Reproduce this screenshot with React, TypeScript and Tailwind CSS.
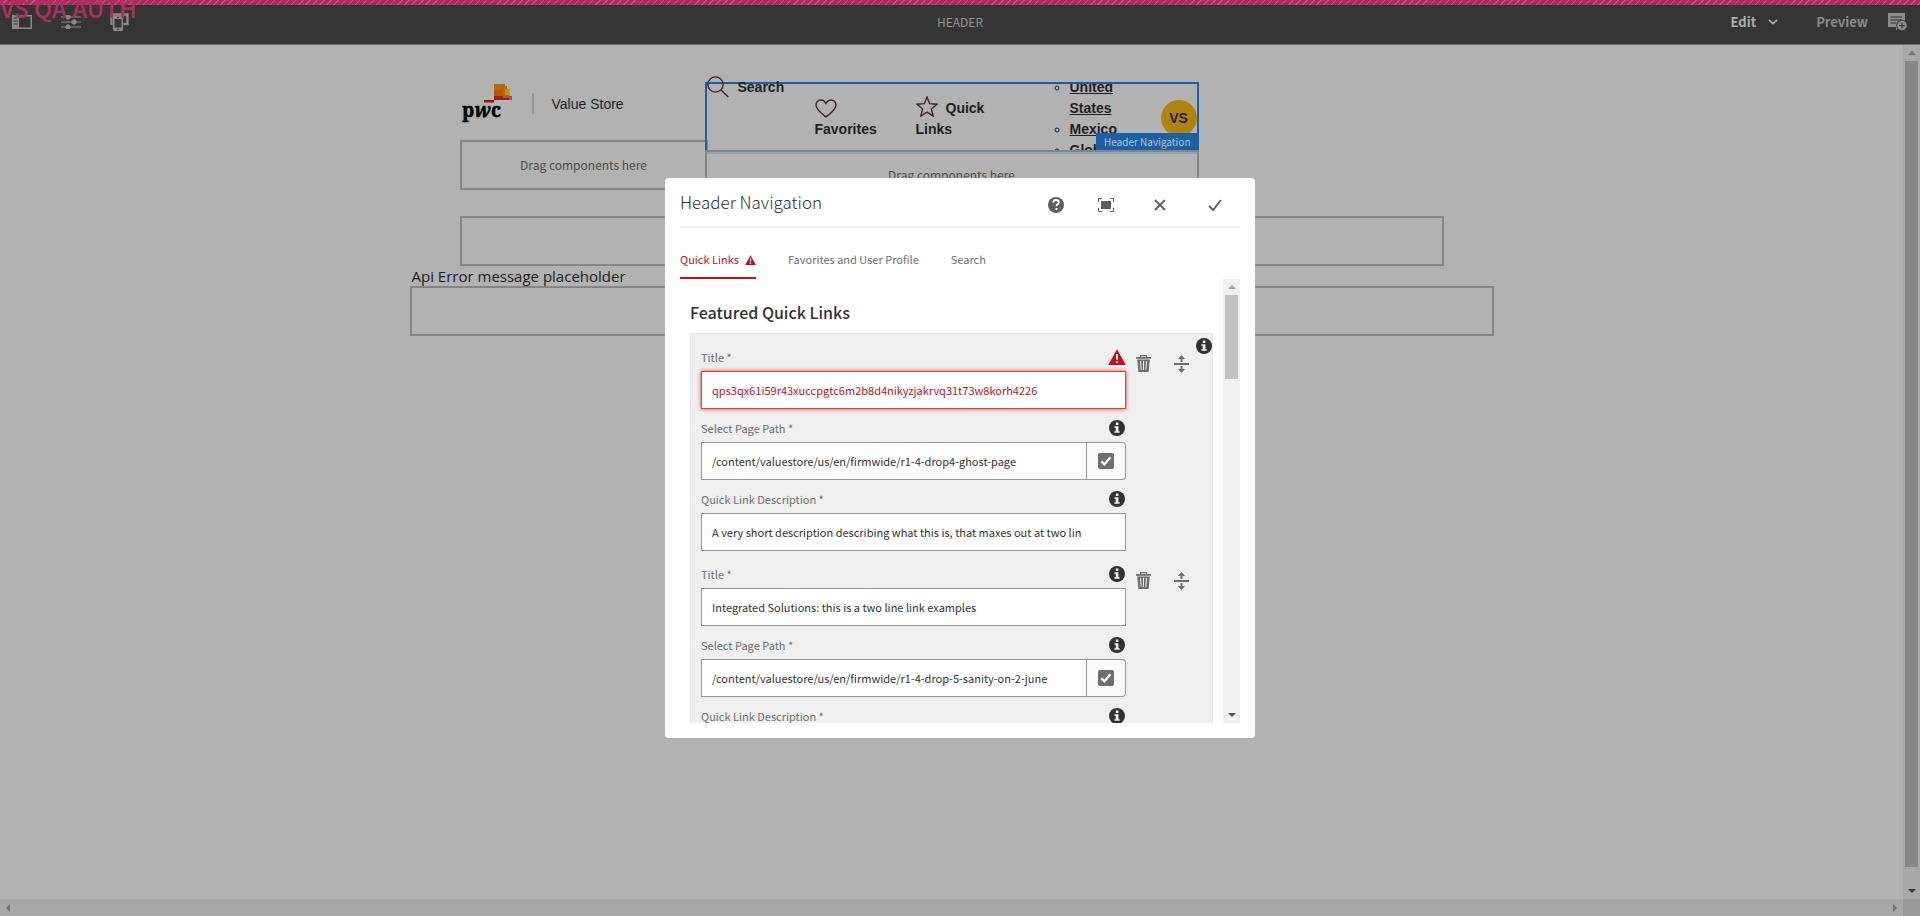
import type { ReactNode } from "react";

const clean = "font-['Noto_Sans_CJK_SC','Noto_Sans',sans-serif]";

function InfoIcon() {
  return (
    <svg viewBox="0 0 16 16" className="size-4 shrink-0" aria-hidden="true">
      <circle cx="8" cy="8" r="8" fill="#323232" />
      <path d="M6.8 2.6h2.6v2.4H6.8zM5.4 6.2h4v5h1.3v1.6H5.4v-1.6h1.3V7.8H5.4z" fill="#efefef" />
    </svg>
  );
}

function AlertIcon({ className }: { className: string }) {
  return (
    <svg viewBox="0 0 18 16" className={className} aria-hidden="true">
      <path d="M9 .2 17.8 16H.2z" fill="#c30f1a" />
      <path d="M8 5h2v5.4H8zM8 12h2v2H8z" fill="#fff" />
    </svg>
  );
}

function TrashIcon() {
  return (
    <svg viewBox="0 0 15 17" className="h-[17px] w-[15px]" fill="none" aria-hidden="true">
      <path d="M4.5 2V.6h6V2" stroke="#6e6e6e" strokeWidth="1.2" />
      <path d="M0 2h15v1.8H0z" fill="#6e6e6e" />
      <path d="M1.2 4.4h12.6L12.6 17H2.4z" fill="#6e6e6e" />
      <path d="M4.6 6l.5 9M7.5 6v9M10.4 6l-.5 9" stroke="#efefef" strokeWidth="1" />
    </svg>
  );
}

function ReorderIcon() {
  return (
    <svg viewBox="0 0 15 18" className="h-[18px] w-[15px]" fill="#6e6e6e" aria-hidden="true">
      <path d="M0 8h15v2H0zM7.5 0 11 4H8.5v3h-2V4H4zM7.5 18 11 14H8.5v-3h-2v3H4z" />
    </svg>
  );
}

function Field({
  id,
  label,
  value,
  invalid = false,
  picker = false,
}: {
  id: string;
  label: string;
  value: string;
  invalid?: boolean;
  picker?: boolean;
}) {
  const tone = invalid
    ? "border-[#e14132] text-[#c30f1a] shadow-[0_0_4px_#e14132]"
    : "border-[#969696] text-[#323232]";
  return (
    <div className="mb-[9px] flex flex-col gap-1">
      <div className="flex h-5 items-center justify-between">
        <label htmlFor={id} className="text-[11px] leading-5 text-[#6e6e6e]">
          {label} *
        </label>
        {invalid ? <AlertIcon className="h-4 w-[18px]" /> : <span className="mr-px"><InfoIcon /></span>}
      </div>
      <div className="flex h-[38px]">
        <input
          id={id}
          defaultValue={value}
          className={`min-w-0 flex-1 border bg-white px-2.5 text-[11px] outline-none ${tone}`}
        />
        {picker && (
          <button
            type="button"
            aria-label="Open selection dialog"
            className="flex w-[39px] items-center justify-center rounded-r border border-l-0 border-[#969696] bg-[#fafafa]"
          >
            <svg viewBox="0 0 16 16" className="size-4" aria-hidden="true">
              <rect width="16" height="16" rx="2" fill="#6e6e6e" />
              <path d="M3.4 8.4l3 3 6-7.2" fill="none" stroke="#fff" strokeWidth="2.2" />
            </svg>
          </button>
        )}
      </div>
    </div>
  );
}

function LinkItem({ id, title, path, description, invalid }: { id: string; title: string; path: string; description: string; invalid?: boolean }) {
  return (
    <div className="mb-1 flex gap-2.5">
      <div className="w-[425px]">
        <Field id={`${id}-title`} label="Title" value={title} invalid={invalid} />
        <Field id={`${id}-path`} label="Select Page Path" value={path} picker />
        <Field id={`${id}-desc`} label="Quick Link Description" value={description} />
      </div>
      <div className="flex items-start gap-[23px] pt-2">
        <button type="button" aria-label="Delete">
          <TrashIcon />
        </button>
        <button type="button" aria-label="Reorder">
          <ReorderIcon />
        </button>
      </div>
    </div>
  );
}

function DropZone({ className, children }: { className: string; children?: ReactNode }) {
  return (
    <div className={`flex h-[50px] items-center justify-center border-2 border-[#858585] text-[#4c4c4c] ${clean} text-xs ${className}`}>
      {children}
    </div>
  );
}

function TopBar() {
  return (
    <header className={`relative flex h-[45px] shrink-0 items-center justify-between border-b border-[#6f6f6f] bg-[#353535] ${clean}`}>
      <div className="flex items-center gap-[29px] pl-3">
        <button type="button" aria-label="Toggle side panel">
          <svg viewBox="0 0 20 14" className="h-3.5 w-5" aria-hidden="true">
            <path d="M0 0h20v14H0zM7 1.5v11h11.5v-11z" fill="#8b8b8b" fillRule="evenodd" />
            <path d="M1.5 3h4M1.5 6h4M1.5 9h4" stroke="#353535" strokeWidth="1.2" />
          </svg>
        </button>
        <button type="button" aria-label="Page information">
          <svg viewBox="0 0 20 14" className="h-3.5 w-5" fill="#8b8b8b" stroke="#8b8b8b" aria-hidden="true">
            <path d="M0 2h20M0 7h20M0 12h20" strokeWidth="1" />
            <circle cx="7" cy="2" r="2.2" />
            <circle cx="13" cy="7" r="2.2" />
            <circle cx="7" cy="12" r="2.2" />
          </svg>
        </button>
        <button type="button" aria-label="Emulator">
          <svg viewBox="0 0 19 18" className="h-[18px] w-[19px]" aria-hidden="true">
            <path d="M1.5 12V1.5h16V11h-4" fill="none" stroke="#8b8b8b" strokeWidth="2.4" />
            <rect x="3" y="2.5" width="10" height="15.5" rx="1" fill="#8b8b8b" />
            <path d="M4.5 6h7v8.500h-7z" fill="#353535" />
            <path d="M7 4.300h2M7 16.200h2" stroke="#353535" />
          </svg>
        </button>
      </div>
      <h1 className="absolute left-1/2 top-3 -translate-x-1/2 text-xs leading-5 text-[#979797]">HEADER</h1>
      <div className="flex items-center pr-3 text-[13px] leading-5">
        <button type="button" className="flex items-center gap-3 font-bold text-[#adadad]">
          Edit
          <svg viewBox="0 0 10 6" className="h-1.5 w-2.5" aria-hidden="true">
            <path d="M1 1l4 3.600L9 1" fill="none" stroke="#adadad" strokeWidth="1.700" />
          </svg>
        </button>
        <button type="button" className="ml-[38px] font-bold text-[#8b8b8b]">Preview</button>
        <button type="button" aria-label="Annotate" className="ml-5">
          <svg viewBox="0 0 20 18" className="h-[18px] w-5" aria-hidden="true">
            <path d="M0 0h17v8l-5 7-4 2v-3H0z" fill="#8b8b8b" />
            <path d="M2.500 4h11.500M2.500 7h11.500M2.500 10h6" stroke="#353535" strokeWidth="1.200" />
            <circle cx="14" cy="12.500" r="5.800" fill="#353535" />
            <circle cx="14" cy="12.500" r="4.800" fill="#8b8b8b" />
            <path d="M14 9.700v5.600M11.200 12.500h5.600" stroke="#353535" strokeWidth="1.200" />
          </svg>
        </button>
      </div>
      <div className="absolute inset-x-0 top-0 h-[5px] bg-[repeating-linear-gradient(135deg,#b02a60_0,#b02a60_4px,#bf5481_4px,#bf5481_5px)]" />
      <p className="absolute left-0 -top-1.5 text-2xl leading-7 font-medium text-[#b02f63]">VS QA AUTH</p>
    </header>
  );
}

function Brand() {
  return (
    <div className="flex h-[95px] items-start pt-[39px]">
      <svg viewBox="0 0 54 40" className="h-10 w-[54px]" aria-label="pwc" role="img">
        <rect x="24" y="16" width="10" height="2.500" fill="#8c1a12" />
        <rect x="34" y="0" width="11" height="16" fill="#b8560a" />
        <rect x="34" y="0" width="9" height="6" fill="#b5690c" />
        <rect x="43" y="2" width="4" height="10" fill="#b8650c" />
        <rect x="45" y="5" width="5" height="8" fill="#bd9713" />
        <rect x="34" y="12" width="16" height="4" fill="#99220f" />
        <rect x="43" y="11" width="6" height="3" fill="#b3600f" />
        <rect x="49" y="12" width="3" height="4" fill="#b04a6c" />
        <text x="2" y="33" fontSize="19" fontWeight="700" fontFamily="'Noto Serif','DejaVu Serif',serif" fill="#000" stroke="#000" strokeWidth=".5">
          p<tspan fontStyle="italic">w</tspan>c
        </text>
      </svg>
      <span className="ml-[18px] mt-[9px] h-[21px] w-0.5 bg-[#989898]" />
      <span className="ml-[18px] mt-[10px] text-sm leading-5 text-[#222]">Value Store</span>
    </div>
  );
}

function HeaderNav() {
  return (
    <nav className="relative flex h-[70px] border-2 border-b-0 border-[#1c5fa5] text-sm leading-[21px] font-bold text-[#1f1f1f]">
      <a href="#search" className="absolute left-0 -top-2 flex gap-[9px]">
        <svg viewBox="0 0 22 22" className="size-[22px]" fill="none" stroke="#3d2226" strokeWidth="1.400" aria-hidden="true">
          <circle cx="8.500" cy="8.500" r="7.600" />
          <path d="M14 14l7.300 7" />
        </svg>
        <span className="mt-px">Search</span>
      </a>
      <div className="flex h-[70px] flex-1 overflow-hidden">
        <a href="#favorites" className="ml-[108px] w-[101px] pt-[15px]">
          <svg viewBox="0 0 22 19" className="mb-px h-[19px] w-[22px]" fill="none" stroke="#3d2226" strokeWidth="1.400" aria-hidden="true">
            <path d="M11 18C6.500 14.500 1 10.500 1 6a4.800 4.800 0 0 1 5-5c2.500 0 4 1.500 5 3.500C12 2.500 13.500 1 16 1a4.800 4.800 0 0 1 5 5c0 4.500-5.500 8.500-10 12z" />
          </svg>
          Favorites
        </a>
        <a href="#quick-links" className="w-[99px] pt-3">
          <span className="flex h-[23px] gap-2">
            <svg viewBox="0 0 22 21" className="h-[21px] w-[22px]" fill="none" stroke="#3d2226" strokeWidth="1.400" aria-hidden="true">
              <path d="M11 1l2.700 6.700 7.300.5-5.600 4.700 1.800 7.200-6.200-4-6.200 4 1.800-7.200L1 8.200l7.300-.5z" />
            </svg>
            <span className="mt-0.5">Quick</span>
          </span>
          <span className="block">Links</span>
        </a>
        <ul className="-mt-[7px] ml-[55px] w-[60px] list-[circle]">
          <li><a href="#us" className="underline">United States</a></li>
          <li><a href="#mexico" className="underline">Mexico</a></li>
          <li><a href="#global" className="underline">Global</a></li>
        </ul>
      </div>
      <span className="absolute right-0 top-4 flex size-9 items-center justify-center rounded-full bg-[#b0850f]">VS</span>
      <span className={`absolute -right-0.5 top-[49px] bg-[#1c5fa5] px-2 text-[10px] leading-[17px] font-normal text-[#b4c4d6] ${clean}`}>
        Header Navigation
      </span>
    </nav>
  );
}

function Arrow({ d, className, fill }: { d: string; className: string; fill: string }) {
  return (
    <svg viewBox="0 0 8 8" className={`size-2 ${className}`} fill={fill} aria-hidden="true">
      <path d={d} />
    </svg>
  );
}

const up = "M0 6l4-4 4 4z";
const down = "M0 2h8L4 6z";

function Dialog() {
  return (
    <section
      role="dialog"
      aria-label="Header Navigation"
      className={`flex h-[560px] w-[590px] flex-col rounded bg-white px-[15px] pb-[15px] ${clean}`}
    >
      <div className="flex h-[50px] shrink-0 items-center justify-between border-b-2 border-[#f0f0f0]">
        <h2 className="text-[17px] font-light text-[#323232]">Header Navigation</h2>
        <div className="flex items-center gap-9 pt-1.5 pr-[18px]">
          <button type="button" aria-label="Help">
            <svg viewBox="0 0 16 16" className="size-4" aria-hidden="true">
              <circle cx="8" cy="8" r="8" fill="#5f5f5f" />
              <path d="M5.200 5.600C5.300 3.900 6.400 3 8 3s2.800.9 2.800 2.400C10.800 7.300 8.400 7.200 8.400 9.300" fill="none" stroke="#fff" strokeWidth="1.800" />
              <path d="M7.400 11h2v2h-2z" fill="#fff" />
            </svg>
          </button>
          <button type="button" aria-label="Toggle full screen" className="-ml-0.5">
            <svg viewBox="0 0 16 14" className="h-3.5 w-4" aria-hidden="true">
              <path d="M3 3h10v8H3z" fill="#5f5f5f" />
              <path d="M.5 4V.5H4M12 .5h3.500V4M15.500 10v3.500H12M4 13.500H.5V10" fill="none" stroke="#5f5f5f" />
            </svg>
          </button>
          <button type="button" aria-label="Cancel" className="ml-1">
            <svg viewBox="0 0 12 12" className="size-3" aria-hidden="true">
              <path d="M1 1l10 10M11 1L1 11" stroke="#5f5f5f" strokeWidth="1.900" />
            </svg>
          </button>
          <button type="button" aria-label="Done" className="ml-1.5">
            <svg viewBox="0 0 14 12" className="h-3 w-3.5" aria-hidden="true">
              <path d="M1 7l4.200 4L13 1" fill="none" stroke="#5f5f5f" strokeWidth="1.900" />
            </svg>
          </button>
        </div>
      </div>
      <div role="tablist" className="flex h-[51px] shrink-0 items-end gap-8 text-[11px] text-[#6e6e6e]">
        <button type="button" role="tab" aria-selected="true" className="flex h-[37px] items-center gap-1.5 border-b-2 border-[#c30f1a] text-[#c30f1a]">
          Quick Links
          <AlertIcon className="h-2.5 w-[11px]" />
        </button>
        <button type="button" role="tab" aria-selected="false" className="h-[37px] pb-0.5">Favorites and User Profile</button>
        <button type="button" role="tab" aria-selected="false" className="h-[37px] pb-0.5">Search</button>
      </div>
      <div className="flex min-h-0 flex-1">
        <div className="min-w-0 flex-1 overflow-hidden pr-2.5 pl-2.5">
          <h3 className="pt-[21px] pb-[9px] text-base leading-6 font-medium text-[#323232]">Featured Quick Links</h3>
          <div className="relative border border-[#e6e6e6] bg-[#efefef] pt-[13px] pl-2.5">
            <span className="absolute top-1 right-0"><InfoIcon /></span>
            <LinkItem
              id="first"
              title="qps3qx61i59r43xuccpgtc6m2b8d4nikyzjakrvq31t73w8korh4226"
              path="/content/valuestore/us/en/firmwide/r1-4-drop4-ghost-page"
              description="A very short description describing what this is, that maxes out at two lin"
              invalid
            />
            <LinkItem
              id="second"
              title="Integrated Solutions: this is a two line link examples"
              path="/content/valuestore/us/en/firmwide/r1-4-drop-5-sanity-on-2-june"
              description=""
            />
          </div>
        </div>
        <div className="flex w-[17px] flex-col items-center bg-[#f0f0f0] py-1">
          <Arrow d={up} className="mb-1" fill="#a3a3a3" />
          <div className="h-[84px] w-[13px] bg-[#c1c1c1]" />
          <Arrow d={down} className="mt-auto" fill="#505050" />
        </div>
      </div>
    </section>
  );
}

export default function App() {
  return (
    <div className="relative flex h-screen flex-col overflow-hidden bg-[#b2b2b2] font-['Liberation_Sans',sans-serif]">
      <TopBar />
      <div className="flex min-h-0 flex-1">
        <main className="min-w-0 flex-1 overflow-hidden">
          <div className="mx-auto flex w-[984px]">
            <div className="w-[245px]">
              <Brand />
              <DropZone className="mr-[-3px]">Drag components here</DropZone>
            </div>
            <div className="w-[494px] pt-[37px]">
              <HeaderNav />
              <DropZone className="relative -mt-0.5 bg-[#b2b2b2] shadow-[inset_0_2px_#8ba3bd]">Drag components here</DropZone>
            </div>
          </div>
          <DropZone className="mx-auto mt-4 w-[984px]" />
          <div className="mx-auto w-[1084px]">
            <p className="pl-0.5 font-['Open_Sans',sans-serif] text-[15px] leading-5 text-[#1c1c1c]">Api Error message placeholder</p>
            <DropZone className="" />
          </div>
        </main>
        <div className="flex w-[17px] flex-col items-center bg-[#a8a8a8] py-1">
          <Arrow d={up} className="mb-1" fill="#727272" />
          <div className="mb-5 w-[13px] flex-1 bg-[#878787]" />
          <Arrow d={down} className="" fill="#383838" />
        </div>
      </div>
      <div className="flex h-[17px] shrink-0 bg-[#a8a8a8]">
        <div className="flex flex-1 items-center justify-between px-1">
          <Arrow d="M6 0v8L2 4z" className="" fill="#727272" />
          <Arrow d="M2 0l4 4-4 4z" className="" fill="#727272" />
        </div>
        <div className="w-[17px] bg-[#999]" />
      </div>
      <div className="absolute inset-0 flex items-center justify-center">
        <Dialog />
      </div>
    </div>
  );
}
